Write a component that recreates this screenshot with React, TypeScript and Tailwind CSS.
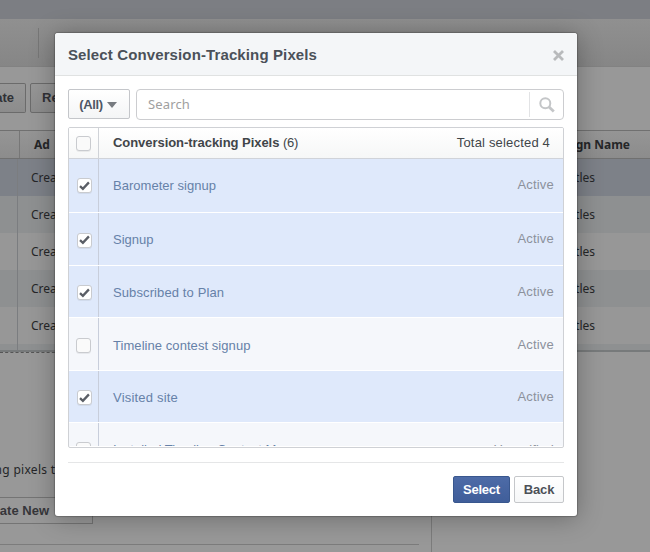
import React from "react";

const rows = [
  { name: "Barometer signup", status: "Active", checked: true, height: "h-[54px]", spacing: "tracking-[0.02px]", statusPad: "pb-[2px]" },
  { name: "Signup", status: "Active", checked: true, height: "h-[53px] pt-[2px]", spacing: "tracking-[0px]", statusPad: "pb-[2px]" },
  { name: "Subscribed to Plan", status: "Active", checked: true, height: "h-[52px] pt-[2px]", spacing: "tracking-[0.11px]", statusPad: "pb-[2px]" },
  { name: "Timeline contest signup", status: "Active", checked: false, height: "h-[53px] pt-[3px]", spacing: "tracking-[0.06px]", statusPad: "pb-[2px]" },
  { name: "Visited site", status: "Active", checked: true, height: "h-[52px] pt-[2px]", spacing: "tracking-[0.2px]", statusPad: "pb-[2px]" },
  { name: "Installed Timeline Contest Manager", status: "Unverified", checked: false, height: "h-[53px] pt-px", spacing: "tracking-[0px]", statusPad: "pb-0" },
];

const adRows = ["bg-[#7d8188]", "bg-[#8e9091]", "bg-[#979797]", "bg-[#8e9091]", "bg-[#979797]"];

function Checkbox({ checked }: { checked: boolean }) {
  return (
    <span className={`flex h-[15px] w-[15px] items-center justify-center rounded-[3px] border border-[#c9cbcf] shadow-[0_1px_0_rgba(0,0,0,0.06)] ${checked ? "bg-white" : "bg-[#fafafa]"}`}>
      {checked && (
        <svg width="11" height="10" viewBox="0 0 11 10" fill="none" className="shrink-0">
          <path d="M1 5.1 3.9 7.8 9.9 1.4" stroke="#5a5e66" strokeWidth="2.3" />
        </svg>
      )}
    </span>
  );
}

function Background() {
  return (
    <div className="flex h-[552px] flex-col text-[#252628]">
      <div className="h-[19px] shrink-0 bg-[#7c7e83]" />
      <div className="flex h-[48px] shrink-0 items-center border-b border-[#828282] bg-linear-to-b from-[#909090] to-[#868686] pl-[38px]">
        <div className="h-[30px] w-px bg-[#777]" />
      </div>
      <div className="flex h-[63px] shrink-0 gap-[4px] pt-[16px] font-['Liberation_Sans',Arial,sans-serif] text-[13px] font-bold text-[#303136]">
        <div className="flex h-[30px] w-[26px] items-center justify-end rounded-r-[2px] border border-l-0 border-[#6b6b6b] bg-linear-to-b from-[#979797] to-[#8c8c8c] pr-[11px] whitespace-nowrap">Create</div>
        <div className="flex h-[30px] w-[80px] items-center rounded-[2px] border border-[#6b6b6b] bg-linear-to-b from-[#979797] to-[#8c8c8c] pl-[11px]">Report</div>
      </div>
      <div className="flex h-[29px] shrink-0 border-y border-[#707070] bg-linear-to-b from-[#959595] to-[#8c8c8c] font-['Noto_Sans',sans-serif] text-[12px] font-bold">
        <div className="w-[20px] border-r border-[#777]" />
        <div className="flex w-[518px] items-center gap-[6px] pl-[14px]"><span>Ad</span><span>Name</span></div>
        <div className="flex w-[92px] items-center justify-end whitespace-nowrap">Campaign Name</div>
      </div>
      <div className="flex shrink-0 flex-col font-['Noto_Sans',sans-serif] text-[12px]">
        {adRows.map((bg, i) => (
          <div key={i} className={`flex h-[37px] ${bg}`}>
            <div className="w-[18px] border-r border-[#7b7d80]" />
            <div className="flex w-[532px] items-center pl-[13px]">Creative</div>
            <div className="flex w-[45px] items-center justify-end whitespace-nowrap">Site titles</div>
          </div>
        ))}
      </div>
      <div className="flex h-[8px] shrink-0 border-b-2 border-[#777a7b] bg-[#8e9091]">
        <div className="w-[18px] border-r border-[#7b7d80]" />
      </div>
      <div className="flex flex-1">
        <div className="flex w-[432px] flex-col border-r border-[#7c7c7c]">
          <div className="w-[60px] border-t border-dashed border-[#555]" />
          <div className="mt-[107px] flex h-[20px] w-[63px] items-center justify-end font-['Noto_Sans',sans-serif] text-[12px] tracking-[0.3px] whitespace-nowrap">tracking pixels to</div>
          <div className="mt-[17px] flex h-[27px] w-[93px] items-center justify-end border border-l-0 border-[#747474] pr-[43px] font-['Liberation_Sans',Arial,sans-serif] text-[13px] font-bold whitespace-nowrap text-[#36363a]">Create New</div>
          <div className="mt-[20px] w-[419px] border-t border-[#7c7c7c]" />
        </div>
      </div>
    </div>
  );
}

function Dialog() {
  return (
    <div className="absolute top-[33px] left-[55px] flex h-[483px] w-[522px] flex-col overflow-hidden rounded-[3px] bg-white font-['Liberation_Sans',Arial,sans-serif] text-[13px] text-[#4e5665]">
      <div className="flex h-[43px] shrink-0 items-center justify-between border-b border-[#e0e2e2] bg-[#f4f6f8] pt-[2px] pr-[13px] pl-[13px]">
        <h1 className="text-[15px] font-bold tracking-[0.12px] whitespace-nowrap text-[#4b5159]">Select Conversion-Tracking Pixels</h1>
        <button aria-label="Close">
          <svg width="11" height="11" viewBox="0 0 11 11" fill="none" stroke="#b8babc" strokeWidth="2.8">
            <path d="m1 1 9 9M10 1l-9 9" />
          </svg>
        </button>
      </div>
      <div className="mx-[13px] mt-[13px] flex h-[31px] shrink-0 gap-[6px]">
        <button className="flex h-[30px] w-[62px] items-center justify-center gap-[4px] rounded-[2px] border border-[#c4c6ca] bg-linear-to-b from-white to-[#f4f5f6] pt-px text-[13px] font-bold text-[#4e5665]">
          <span className="-ml-[2px] tracking-[-0.4px]">(All)</span>
          <svg width="10" height="6" viewBox="0 0 10 6"><path d="M0 0h10L5 6z" fill="#777b80" /></svg>
        </button>
        <div className="flex flex-1 items-center rounded-[4px] border border-[#cccdd0] pl-[11px]">
          <span className="flex-1 font-['Noto_Sans',sans-serif] text-[13px] tracking-[0.15px] text-[#a0a0a0]">Search</span>
          <div className="flex h-[25px] w-[34px] items-center justify-center border-l border-[#e2e3e5]">
            <svg width="16" height="16" viewBox="0 0 16 16" fill="none" stroke="#c4c6c8">
              <circle cx="6.3" cy="6.3" r="5" strokeWidth="2" />
              <path d="m9.8 9.8 5 4.8" strokeWidth="2.8" />
            </svg>
          </div>
        </div>
      </div>
      <div className="mx-[13px] mt-[7px] flex h-[321px] shrink-0 flex-col overflow-hidden rounded-[2px] border border-[#cfd1d5] bg-white pb-px">
        <div className="flex h-[31px] shrink-0 border-b border-[#d0d3d9] bg-linear-to-b from-white to-[#f6f7f7]">
          <div className="flex w-[30px] items-center border-r border-[#d0d3d8] pl-[7px]"><Checkbox checked={false} /></div>
          <div className="flex flex-1 items-center justify-between pr-[13px] pl-[14px] text-[#414549]">
            <span className="whitespace-nowrap"><b className="tracking-[-0.05px]">Conversion-tracking Pixels</b> <span className="tracking-[-0.3px]">(6)</span></span>
            <span className="tracking-[0.18px]">Total selected 4</span>
          </div>
        </div>
        <div className="flex min-h-0 flex-1 flex-col overflow-hidden">
          {rows.map((row) => (
            <div key={row.name} className={`relative flex shrink-0 border-b border-white ${row.height} ${row.checked ? "bg-[#dfe9fb]" : "bg-[#f5f7fb]"}`}>
              <div className={`flex w-[30px] items-center ${row.checked ? "pl-[8px]" : "pl-[7px]"}`}><Checkbox checked={row.checked} /></div>
              <div className="absolute top-0 bottom-0 left-[29px] w-px bg-[#c8cedb]" />
              <div className="flex flex-1 items-center justify-between pr-[9px] pl-[14px]">
                <span className={`text-[#6681a8] ${row.spacing}`}>{row.name}</span>
                <span className={`tracking-[0.2px] text-[#8c919b] ${row.statusPad}`}>{row.status}</span>
              </div>
            </div>
          ))}
        </div>
      </div>
      <div className="mx-[13px] mt-[14px] flex shrink-0 justify-end gap-[4px] border-t border-[#e5e6e7] pt-[13px] text-[13px] font-bold">
        <button className="h-[27px] w-[57px] rounded-[2px] border border-[#39578e] bg-linear-to-b from-[#4d6ba7] to-[#405e9a] tracking-[-0.25px] text-white">Select</button>
        <button className="h-[27px] w-[50px] rounded-[2px] border border-[#c5c7ca] bg-linear-to-b from-white to-[#f6f7f8] tracking-[-0.1px] text-[#4c5057]">Back</button>
      </div>
    </div>
  );
}

export default function App() {
  return (
    <main className="relative h-[552px] w-[650px] overflow-hidden bg-[#989898]">
      <Background />
      <div className="absolute top-[33px] left-[55px] h-[483px] w-[522px] rounded-[3px] shadow-[0_2px_26px_rgba(0,0,0,0.3),0_0_1px_1px_rgba(0,0,0,0.2)]" />
      <Dialog />
    </main>
  );
}
